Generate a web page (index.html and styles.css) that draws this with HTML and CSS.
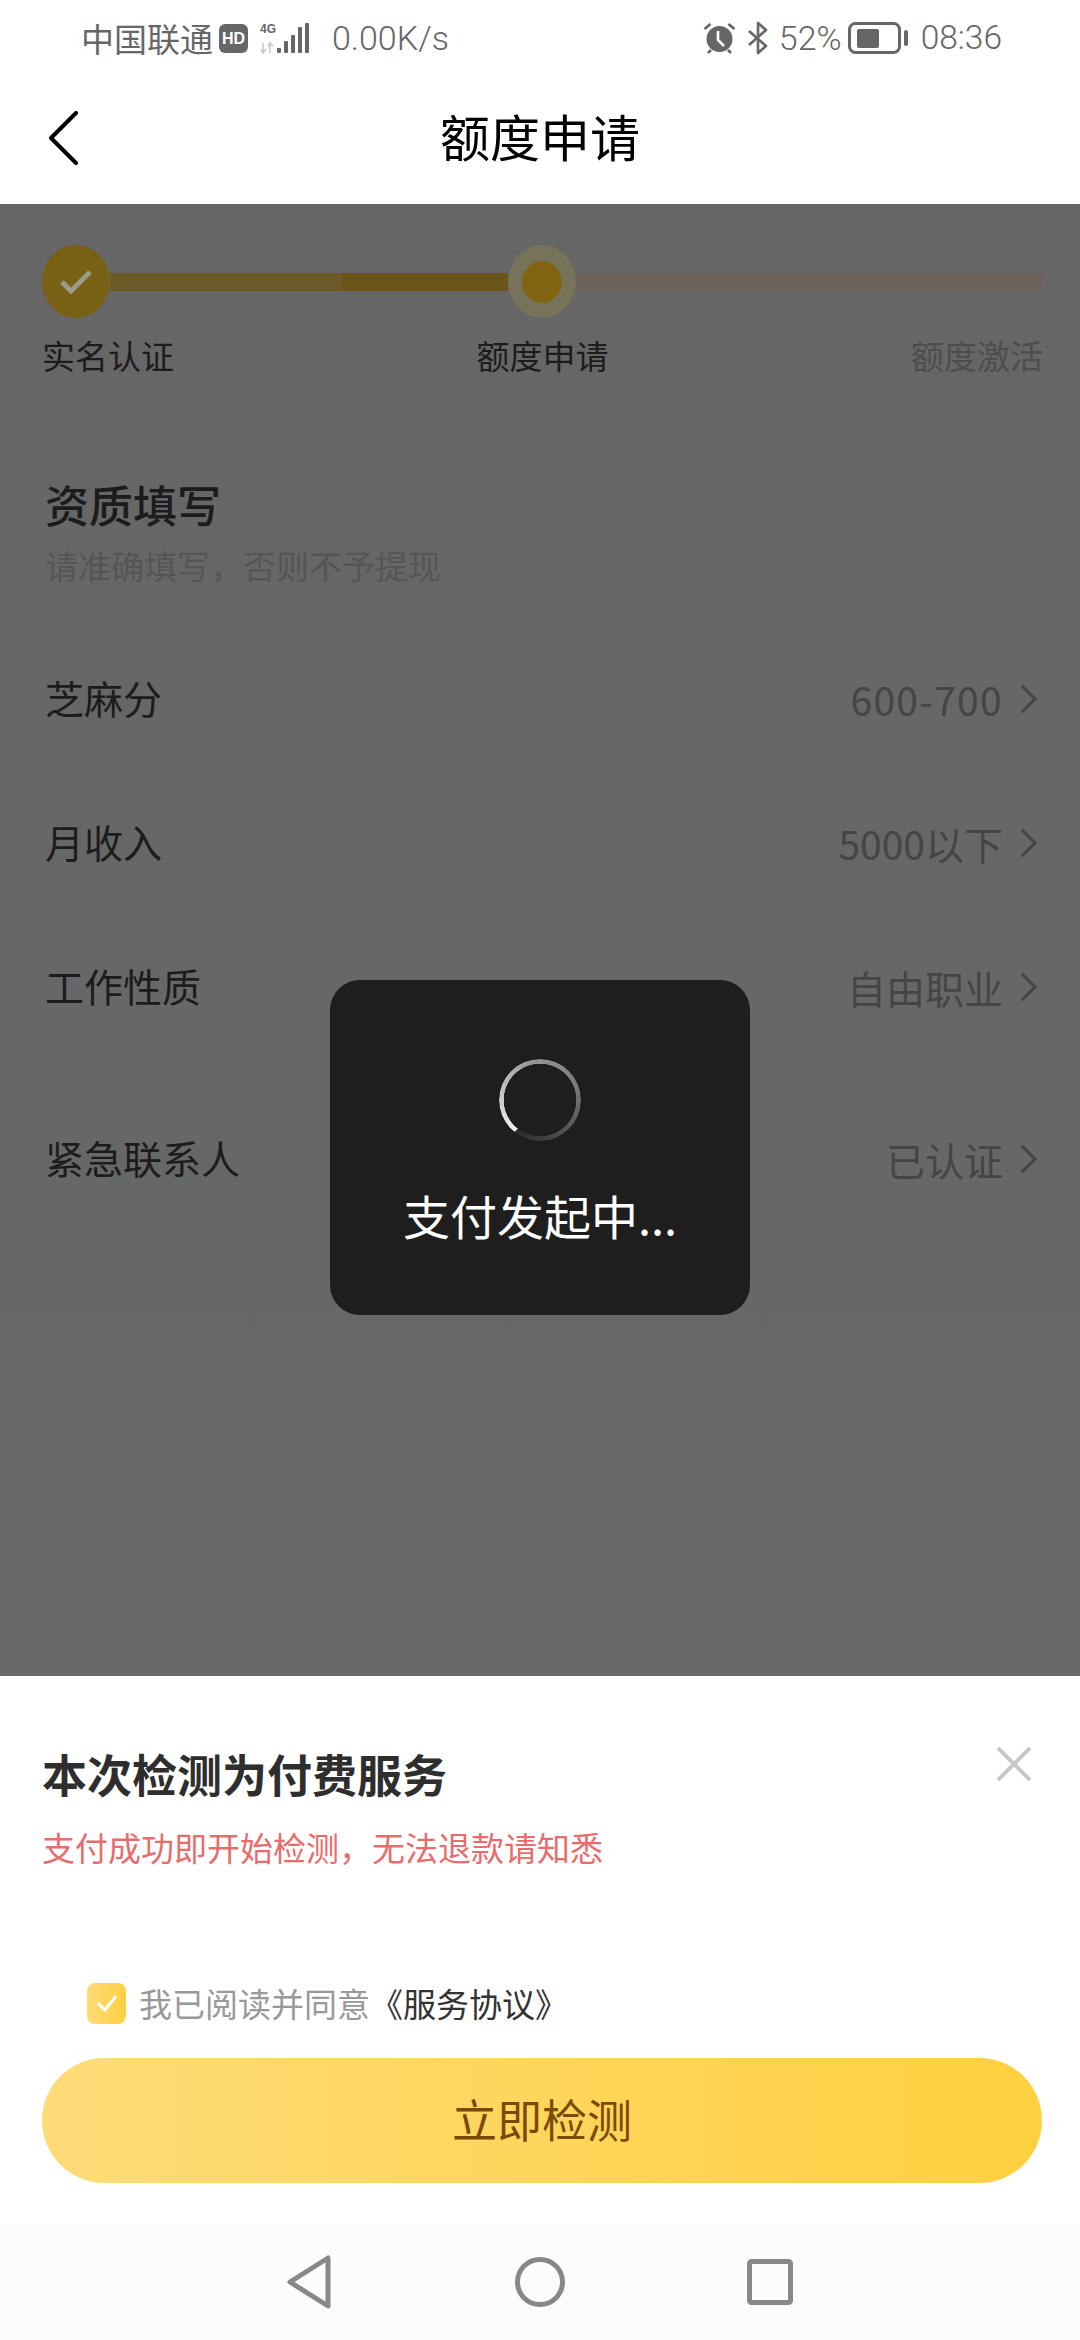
FILE: index.html
```html
<!DOCTYPE html>
<html lang="zh-CN">
<head>
  <meta charset="UTF-8">
  <meta name="viewport" content="width=device-width, initial-scale=1.0">
  <title>额度申请</title>
  <link rel="stylesheet" href="styles.css">
</head>
<body>
  <div class="screen">
    <div class="status-bar">
      <div class="status-left">
        <span class="carrier">中国联通</span>
        <span class="hd">HD</span>
        <svg class="signal" width="52" height="32" viewBox="0 0 52 32">
          <text x="1" y="11" class="signal-4g">4G</text>
          <path d="M4 21v10M7 27l-3 4-2-3M11 31V21M9 24l2-3 3 3" fill="none" stroke="#c9c9c9" stroke-width="1.6"/>
          <rect x="18" y="26" width="4" height="5" rx="1" fill="#666"/>
          <rect x="25" y="19" width="4" height="12" rx="1" fill="#666"/>
          <rect x="32" y="13" width="4" height="18" rx="1" fill="#666"/>
          <rect x="39" y="5" width="4" height="26" rx="1" fill="#666"/>
          <rect x="46" y="1" width="4" height="30" rx="1" fill="#666"/>
        </svg>
        <span class="speed">0.00K/s</span>
      </div>
      <div class="status-right">
        <svg width="33" height="32" viewBox="0 0 33 32">
          <circle cx="16.5" cy="17" r="13" fill="#666"/>
          <path d="M15 9v9l6 6" fill="none" stroke="#fff" stroke-width="2.6"/>
          <path d="M1.5 7l6-5M31.5 7l-6-5M5 31l3-3M28 31l-3-3" fill="none" stroke="#666" stroke-width="2.8"/>
        </svg>
        <svg class="bt" width="22" height="34" viewBox="0 0 22 34">
          <path d="M2 10l17 15-8 7V2l8 7L2 24" fill="none" stroke="#666" stroke-width="2.6" stroke-linejoin="round"/>
        </svg>
        <span class="battery-pct">52%</span>
        <svg class="battery" width="60" height="32" viewBox="0 0 60 32">
          <rect x="1.5" y="1.5" width="50" height="29" rx="6" fill="none" stroke="#666" stroke-width="3"/>
          <rect x="9" y="7" width="22" height="19" rx="2" fill="#666"/>
          <rect x="56" y="8" width="4" height="16" rx="2" fill="#666"/>
        </svg>
        <span class="clock">08:36</span>
      </div>
    </div>

    <div class="title-bar">
      <svg class="back" width="30" height="54" viewBox="0 0 30 54">
        <path d="M28 2L3 27l25 25" fill="none" stroke="#000" stroke-width="4" stroke-linecap="round" stroke-linejoin="round"/>
      </svg>
      <h1>额度申请</h1>
    </div>

    <main class="content">
      <div class="steps">
        <div class="step-bar">
          <div class="dot dot-done">
            <svg width="32" height="24" viewBox="0 0 32 24">
              <path d="M2 12l9 9L30 2" fill="none" stroke="#9c9a8c" stroke-width="5"/>
            </svg>
          </div>
          <div class="line line-done"></div>
          <div class="dot dot-current"><span></span></div>
          <div class="line line-todo"></div>
        </div>
        <div class="step-labels">
          <span>实名认证</span>
          <span>额度申请</span>
          <span class="todo">额度激活</span>
        </div>
      </div>

      <section class="form">
        <h2>资质填写</h2>
        <p class="hint">请准确填写，否则不予提现</p>
        <div class="row"><span>芝麻分</span><span class="val"><span class="num">600-700</span><i class="chev"></i></span></div>
        <div class="row"><span>月收入</span><span class="val">5000以下<i class="chev"></i></span></div>
        <div class="row"><span>工作性质</span><span class="val">自由职业<i class="chev"></i></span></div>
        <div class="row row-last"><span>紧急联系人</span><span class="val">已认证<i class="chev"></i></span></div>
      </section>

      <div class="toast">
        <div class="spinner"></div>
        <div class="toast-text">支付发起中...</div>
      </div>
    </main>

    <div class="sheet">
      <svg class="close" width="36" height="36" viewBox="0 0 36 36">
        <path d="M2 2l32 32M34 2L2 34" fill="none" stroke="#c8c8c8" stroke-width="4"/>
      </svg>
      <h3>本次检测为付费服务</h3>
      <p class="warn">支付成功即开始检测，无法退款请知悉</p>
      <div class="agree">
        <span class="checkbox">
          <svg width="22" height="18" viewBox="0 0 22 18">
            <path d="M2 9l7 7L20 2" fill="none" stroke="#fff" stroke-width="3"/>
          </svg>
        </span>
        <span class="agree-text">我已阅读并同意<b>《服务协议》</b></span>
      </div>
      <button class="go" type="button">立即检测</button>
    </div>

    <div class="nav-bar">
      <svg width="46" height="54" viewBox="0 0 46 54">
        <path d="M42 3v48L4 27z" fill="none" stroke="#888" stroke-width="5" stroke-linejoin="round"/>
      </svg>
      <svg width="50" height="50" viewBox="0 0 50 50">
        <circle cx="25" cy="25" r="22.5" fill="none" stroke="#888" stroke-width="5"/>
      </svg>
      <svg width="46" height="46" viewBox="0 0 46 46">
        <rect x="2.5" y="2.5" width="41" height="41" rx="2" fill="none" stroke="#888" stroke-width="5"/>
      </svg>
    </div>
  </div>
</body>
</html>
```

FILE: styles.css
```css
* { box-sizing: border-box; }

body {
  margin: 0;
  font-family: "Noto Sans CJK SC", "Noto Sans", sans-serif;
  background: #fff;
}

.screen {
  width: 1080px;
  height: 2340px;
  display: flex;
  flex-direction: column;
  overflow: hidden;
}

/* status bar */
.status-bar {
  height: 76px;
  padding: 0 78px 0 81px;
  display: flex;
  justify-content: space-between;
  align-items: center;
  color: #666;
  font-size: 33px;
  line-height: 40px;
}
.status-left, .status-right { display: flex; align-items: center; }
.hd {
  width: 29px;
  height: 29px;
  margin-left: 6px;
  border-radius: 6px;
  background: #666;
  color: #fff;
  font: bold 16px/29px "Liberation Sans", sans-serif;
  text-align: center;
}
.signal { margin-left: 11px; }
.signal-4g { font: bold 12px "Liberation Sans", sans-serif; fill: #666; }
.speed, .battery-pct, .clock {
  font-family: Roboto, sans-serif;
  font-weight: 300;
  font-size: 34px;
}
.speed { margin-left: 21px; }
.bt { margin-left: 11px; }
.battery-pct { margin-left: 10px; }
.battery { margin-left: 6px; }
.clock { margin-left: 13px; font-size: 33.5px; }

/* title bar */
.title-bar {
  height: 128px;
  padding-bottom: 11px;
  display: flex;
  justify-content: center;
  align-items: center;
  position: relative;
}
.back { position: absolute; left: 48px; top: 35px; }
h1 {
  margin: 0;
  font-size: 50px;
  font-weight: 400;
  line-height: 70px;
  color: #000;
}

/* dimmed page behind the sheet */
.content {
  flex: 1;
  position: relative;
  background: linear-gradient(#666, #676868);
  color: #1c1c1c;
}

.steps { padding: 41px 37px 0 42px; }
.step-bar { display: flex; align-items: center; height: 73px; }
.dot {
  width: 68px;
  height: 73px;
  flex: none;
  border-radius: 50%;
  display: flex;
  justify-content: center;
  align-items: center;
}
.dot-done { background: #786015; }
.dot-current { background: #77735a; }
.dot-current span {
  width: 40px;
  height: 42px;
  border-radius: 50%;
  background: #806412;
}
.line { height: 18px; }
.line-done { flex: 0 0 398px; background: linear-gradient(90deg, #6b5a28, #6b5a28 58%, #6b5518 58%); }
.line-todo { flex: 1; background: #6b625a; }
.step-labels {
  margin-top: 17px;
  display: flex;
  justify-content: space-between;
  font-size: 33px;
  line-height: 40px;
}
.step-labels .todo { color: #4d4d4d; }

.form { padding: 99px 45px 0; }
h2 {
  margin: 0;
  font-size: 44px;
  font-weight: 500;
  line-height: 60px;
}
.hint {
  margin: 9px 0 38px;
  font-size: 33px;
  line-height: 44px;
  color: #555;
}
.row {
  height: 144px;
  display: flex;
  justify-content: space-between;
  align-items: center;
  font-size: 39px;
}
.row-last { margin-top: 28px; }
.val { display: flex; align-items: center; margin-top: 3px; color: #454545; }
.num { letter-spacing: 1.3px; }
.chev {
  width: 20px;
  height: 20px;
  margin: 0 2px 0 10px;
  border-top: 3px solid #454545;
  border-right: 3px solid #454545;
  transform: rotate(45deg);
}

/* loading toast */
.toast {
  position: absolute;
  left: 330px;
  top: 776px;
  width: 420px;
  height: 335px;
  border-radius: 30px;
  background: #1e1e1e;
  display: flex;
  flex-direction: column;
  align-items: center;
}
.spinner {
  margin-top: 79px;
  width: 82px;
  height: 82px;
  border-radius: 50%;
  background: conic-gradient(from 218deg, #f0f0f0, #999 35%, #777 60%, #2c2c2c 98%);
  -webkit-mask: radial-gradient(closest-side, transparent 36px, #000 36.5px);
  mask: radial-gradient(closest-side, transparent 36px, #000 36.5px);
}
.toast-text {
  margin-top: 41px;
  color: #fff;
  font-size: 47px;
  line-height: 66px;
}

/* bottom sheet */
.sheet {
  height: 548px;
  padding: 68px 38px 0 42px;
  background: #fff;
  position: relative;
}
.close { position: absolute; right: 48px; top: 70px; }
h3 {
  margin: 0;
  font-size: 45px;
  font-weight: 700;
  line-height: 60px;
  color: #2e2e2e;
}
.warn {
  margin: 21px 0 112px;
  font-size: 33px;
  line-height: 44px;
  color: #e86c6c;
}
.agree {
  height: 44px;
  padding-left: 45px;
  display: flex;
  align-items: center;
  gap: 13px;
}
.checkbox {
  width: 39px;
  height: 41px;
  border-radius: 8px;
  background: linear-gradient(90deg, #fedb75, #ffd040);
  display: flex;
  justify-content: center;
  align-items: center;
}
.agree-text { font-size: 33px; line-height: 44px; color: #999; }
.agree-text b { font-weight: 400; color: #333; }
.go {
  display: block;
  width: 1000px;
  height: 125px;
  margin-top: 33px;
  padding-bottom: 5px;
  border: 0;
  border-radius: 63px;
  background: linear-gradient(90deg, #fedb78, #ffd03f);
  color: #7a4a0a;
  font-family: inherit;
  font-size: 45px;
}

/* system nav */
.nav-bar {
  height: 116px;
  padding-left: 286px;
  background: #fcfcfc;
  display: flex;
  align-items: center;
}
.nav-bar svg:nth-child(2) { margin-left: 183px; }
.nav-bar svg:nth-child(3) { margin-left: 182px; }
```
